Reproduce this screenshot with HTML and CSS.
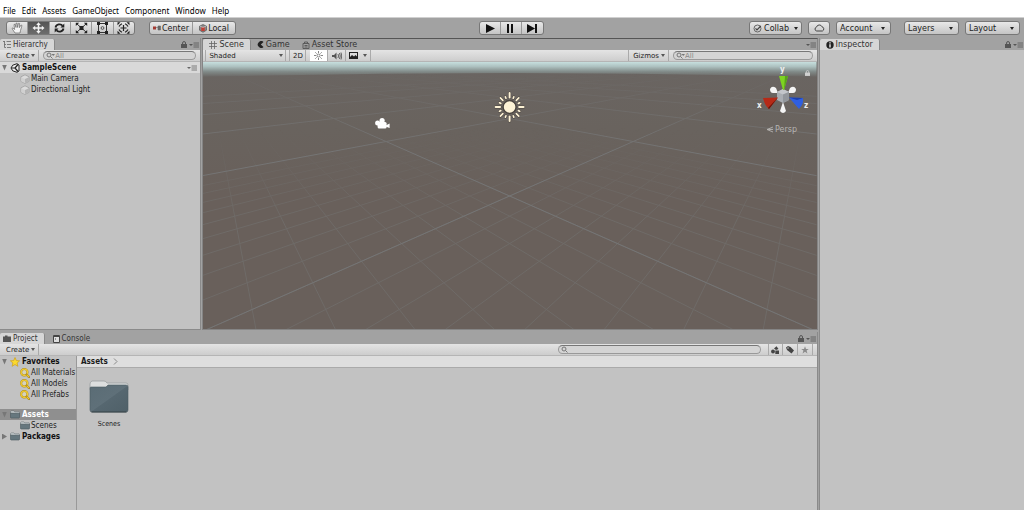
FILE: index.html
```html
<!DOCTYPE html>
<html lang="en">
  <head>
    <meta charset="UTF-8" />
    <meta name="viewport" content="width=device-width, initial-scale=1.0" />
    <title>SampleScene</title>
    <link rel="stylesheet" href="styles.css">
  </head>
  <body>
    <!-- Shared icons -->
    <svg class="sprite" aria-hidden="true">
      <symbol id="lock" viewBox="0 0 6 7">
        <path d="M1.6 3.5V2a1.4 1.4 0 0 1 2.9 0v1.5" fill="none" stroke="currentColor" stroke-width="1" />
        <rect x="0" y="3" width="6" height="4" fill="currentColor" />
      </symbol>
      <symbol id="options" viewBox="0 0 10 6">
        <path d="M0 2h4l-2 2z" fill="currentColor" />
        <path d="M4.5 1H10M4.5 3H10M4.5 5H10" stroke="currentColor" stroke-width=".8" />
      </symbol>
      <symbol id="search" viewBox="0 0 9 7">
        <circle cx="3" cy="3" r="2" fill="none" stroke="#777" />
        <path d="M4.5 4.5l2 2" stroke="#777" />
      </symbol>
      <symbol id="search-drop" viewBox="0 0 9 7">
        <circle cx="3" cy="3" r="2" fill="none" stroke="#777" />
        <path d="M4.5 4.5l2 2" stroke="#777" />
        <path d="M5.500 2h3.500L7.200 4z" fill="#777" />
      </symbol>
      <symbol id="cube" viewBox="0 0 10 10">
        <path d="M5 .8l4 2v4.600L5 9.400 1 7.400V2.800z" fill="#dcdcdc" stroke="#999" stroke-width=".7" />
        <path d="M1.200 3.200L5 5v4L1.200 7.200z" fill="#d0d0d0" />
        <path d="M8.800 3.200L5 5v4l3.800-1.800z" fill="#b4b4b4" />
      </symbol>
      <symbol id="folder" viewBox="0 0 11 9">
        <path d="M.5 3V1.500L1.300.6h3l.8 1H10l.5.6V4z" fill="#d3d9da" stroke="#5c686c" stroke-width=".6" />
        <path d="M.5 3h10v4.800l-.6.6H1.100l-.6-.6z" fill="#66777e" stroke="#46545a" stroke-width=".6" />
      </symbol>
      <symbol id="filter" viewBox="0 0 10 10">
        <circle cx="4.300" cy="4.300" r="3.200" fill="#d6d3bd" stroke="#a8841a" stroke-width="2" />
        <circle cx="4.300" cy="4.300" r="3.200" fill="none" stroke="#f0cb30" stroke-width="1.400" />
        <path d="M6.600 6.600L9 9" stroke="#a8841a" stroke-width="2.200" stroke-linecap="round" />
        <path d="M6.600 6.600L9 9" stroke="#f0cb30" stroke-width="1.200" />
      </symbol>
    </svg>

    <nav class="menu">
      <button>File</button>
      <button>Edit</button>
      <button>Assets</button>
      <button>GameObject</button>
      <button>Component</button>
      <button>Window</button>
      <button>Help</button>
    </nav>

    <!-- Main toolbar -->
    <header class="toolbar">
      <div class="toolbar-left">
        <div class="group tools">
          <button aria-label="Hand">
            <svg width="13" height="12" viewBox="0 0 13 12"><path d="M4 11L1 6.500l1-.6L3.600 7.500 3 2.500l1-.3L5 5.500V1.200h1.100L6.500 5.400 7.500 1.300l1.100.2-.3 4.200L10 3l1 .5-1.500 5L9 11z" fill="#f4f4f4" stroke="#666" stroke-width=".7" /></svg>
          </button>
          <button class="active" aria-label="Move">
            <svg width="13" height="12" viewBox="0 0 13 12"><path d="M6.500.2L8.800 3H7.300v2.200H9.800V3.700L12.500 6 9.800 8.300V6.800H7.300V9h1.500L6.500 11.800 4.200 9h1.500V6.800H3.200v1.500L.5 6l2.700-2.300v1.500h2.500V3H4.200z" fill="#f2f2f2" /></svg>
          </button>
          <button aria-label="Rotate">
            <svg width="13" height="12" viewBox="0 0 13 12"><path d="M2.500 5.500C3.200 2 8 1.500 9.500 3.700M10.500 6.500C9.800 10 5 10.500 3.500 8.300" fill="none" stroke="#222" stroke-width="1.800" /><path d="M11.300 1.500v3.900H7.500zM1.700 10.500V6.600h3.800z" fill="#222" /></svg>
          </button>
          <button aria-label="Scale">
            <svg width="13" height="12" viewBox="0 0 13 12"><path d="M2 2l9 8M11 2L2 10" stroke="#333" stroke-width="1" /><path d="M4.500 4h4v4h-4z" fill="#222" /><path d="M.8.800h3.400L.8 4zM12.200.800H8.800L12.200 4zM.8 11.200h3.400L.8 8zM12.200 11.200H8.800l3.400-3.200z" fill="#222" /></svg>
          </button>
          <button aria-label="Rect">
            <svg width="13" height="12" viewBox="0 0 13 12"><path d="M2.500 1.500h8v9h-8z" fill="none" stroke="#333" /><path d="M1 0h3v3H1zM9 0h3v3H9zM1 9h3v3H1zM9 9h3v3H9z" fill="#222" /><circle cx="6.500" cy="6" r="1.400" fill="none" stroke="#555" /></svg>
          </button>
          <button aria-label="Transform">
            <svg width="13" height="12" viewBox="0 0 13 12"><path d="M2 4.500Q3 2.500 5 1.800M8 1.800Q10 2.500 11 4.500M11 7.500Q10 9.500 8 10.200M5 10.200Q3 9.500 2 7.500" fill="none" stroke="#222" stroke-width="1.200" /><path d="M6.500 3v6M3.500 6h6" stroke="#222" stroke-width="1.200" /><path d="M.5.200h3l-3 3zM12.500.200h-3l3 3zM.5 11.800h3l-3-3zM12.500 11.800h-3l3-3z" fill="#222" /></svg>
          </button>
        </div>
        <div class="group pivots">
          <button>
            <svg width="8" height="7" viewBox="0 0 8 7"><path d="M0 1.500h3v3H0z" fill="#a33a32" /><path d="M3 2.500h2M5 1h2.500v4H5z" fill="#666" stroke="#666" stroke-width=".6" /></svg>
            Center
          </button>
          <button>
            <svg width="8" height="9" viewBox="0 0 8 9"><path d="M4 .5l3.500 1.700v4L4 8.300.5 6.200v-4z" fill="#888" stroke="#444" stroke-width=".6" /><path d="M2.300 3h3.400v4H2.300z" fill="#c33f35" /><path d="M1 2.200l3 1.300 3-1.300" fill="none" stroke="#ddd" stroke-width=".6" /></svg>
            Local
          </button>
        </div>
      </div>

      <div class="group play">
        <button aria-label="Play"><svg width="10" height="9" viewBox="0 0 10 9"><path d="M1 0l9 4.500L1 9z" fill="#111" /></svg></button>
        <button aria-label="Pause"><svg width="7" height="9" viewBox="0 0 7 9"><path d="M0 0h2v9H0zM4 0h2v9H4z" fill="#111" /></svg></button>
        <button aria-label="Step"><svg width="11" height="9" viewBox="0 0 11 9"><path d="M0 0l8 4.500L0 9zM8 0h2v9H8z" fill="#111" /></svg></button>
      </div>

      <div class="toolbar-right">
        <button class="btn collab">
          <svg width="9" height="9" viewBox="0 0 9 9"><circle cx="4.500" cy="4.500" r="3.500" fill="none" stroke="#666" stroke-width="1" /><path d="M2.500 4.300l1.500 1.500L7.800 2" fill="none" stroke="#444" stroke-width="1.200" /></svg>
          Collab
          <span class="arrow"></span>
        </button>
        <button class="btn cloud" aria-label="Services">
          <svg width="11" height="8" viewBox="0 0 11 8"><path d="M2.700 7a2 2 0 0 1-.2-3.900A2.900 2.900 0 0 1 8 2.800 2.200 2.200 0 0 1 8.400 7z" fill="none" stroke="#444" /></svg>
        </button>
        <div class="drop"><select aria-label="Account"><option>Account</option></select></div>
        <div class="drop spaced"><select aria-label="Layers"><option>Layers</option></select></div>
        <div class="drop"><select aria-label="Layout"><option>Layout</option></select></div>
      </div>
    </header>

    <main class="workspace">
      <div class="main-column">
        <div class="top-row">
          <!-- Hierarchy -->
          <section class="panel hierarchy">
            <div class="tabs">
              <button class="tab active">
                <svg width="8" height="7" viewBox="0 0 8 7"><path d="M0 .5h2M1.500 .5v6M1.500 3.500H3M1.500 6.500H3M3.500.500H8M4 3.500h4M4 6.500h4" stroke="#666" stroke-width=".8" fill="none" /></svg>
                Hierarchy
              </button>
              <div class="tab-tools">
                <svg width="6" height="7"><use href="#lock" /></svg>
                <svg width="10" height="6"><use href="#options" /></svg>
              </div>
            </div>
            <div class="bar">
              <button class="bar-btn">Create <span class="arrow"></span></button>
              <label class="search">
                <svg width="9" height="7"><use href="#search-drop" /></svg>
                <input type="text" placeholder="All" aria-label="Search hierarchy">
              </label>
            </div>
            <div class="row scene-row">
              <span class="fold open"></span>
              <svg width="10" height="10" viewBox="0 0 10 10"><path d="M7 .7L2.700 2.200 1 5l1.700 2.800L7 9.300 9 8V2z" fill="#eee" stroke="#222" stroke-width="1" /><path d="M5 5H1.500M5 5l3-3.500M5 5l3 3.500" stroke="#222" stroke-width="1.200" /></svg>
              <span>SampleScene</span>
              <svg class="push" width="10" height="6"><use href="#options" /></svg>
            </div>
            <div class="row child">
              <svg width="10" height="10"><use href="#cube" /></svg>
              <span>Main Camera</span>
            </div>
            <div class="row child">
              <svg width="10" height="10"><use href="#cube" /></svg>
              <span>Directional Light</span>
            </div>
          </section>

          <!-- Scene view -->
          <section class="panel scene">
            <div class="tabs">
              <button class="tab active">
                <svg width="8" height="8" viewBox="0 0 8 8"><path d="M2.500 0v8M5.500 0v8M0 2.500h8M0 5.500h8" stroke="#666" stroke-width=".8" /></svg>
                Scene
              </button>
              <button class="tab">
                <svg width="7" height="7" viewBox="0 0 7 7"><path d="M6.500 1A3.400 3.400 0 1 0 6.500 6L3.800 3.500z" fill="#222" /></svg>
                Game
              </button>
              <button class="tab">
                <svg width="8" height="8" viewBox="0 0 8 8"><path d="M1 2.500h6v5H1zM2.500 2.500V1h3v1.500M2.500 4.500h3M2.500 6h3" fill="none" stroke="#555" stroke-width=".9" /></svg>
                Asset Store
              </button>
              <div class="tab-tools">
                <svg width="10" height="6"><use href="#options" /></svg>
              </div>
            </div>
            <div class="bar scene-bar">
              <div class="bar-drop"><select aria-label="Shading"><option>Shaded</option></select></div>
              <button class="bar-btn split">2D</button>
              <button class="bar-btn lit" aria-label="Lighting">
                <svg width="9" height="9" viewBox="0 0 9 9"><circle cx="4.500" cy="4.500" r="1.500" fill="none" stroke="#666" stroke-width=".8" /><path d="M4.500 0v2M4.500 7v2M0 4.500h2M7 4.500h2M1.300 1.300l1.300 1.300M6.400 6.400l1.300 1.300M7.700 1.300L6.400 2.600M2.600 6.400L1.300 7.700" stroke="#666" stroke-width=".8" /></svg>
              </button>
              <button class="bar-btn icon" aria-label="Audio">
                <svg width="10" height="8" viewBox="0 0 10 8"><path d="M0 3h2l2.500-2.500v7L2 5H0z" fill="#555" /><path d="M6 2q1 2 0 4M7.500 1q1.500 3 0 6M9 .5q1.500 3.500 0 7" fill="none" stroke="#555" stroke-width=".9" /></svg>
              </button>
              <button class="bar-btn icon effects" aria-label="Effects">
                <svg width="9" height="7" viewBox="0 0 9 7"><path d="M0 0h9v7H0z" fill="#222" /><path d="M1 5l2-2 2 1.500L6.500 3 8 4.500V1H1z" fill="#ddd" /></svg>
                <span class="arrow"></span>
              </button>
              <button class="bar-btn gizmos">Gizmos <span class="arrow"></span></button>
              <label class="search scene-search">
                <svg width="9" height="7"><use href="#search-drop" /></svg>
                <input type="text" placeholder="All" aria-label="Search scene">
              </label>
            </div>
            <div class="viewport">
              <svg class="world" viewBox="0 0 614 267" preserveAspectRatio="xMidYMin slice">
                <defs>
                  <linearGradient id="sky" x1="0" y1="0" x2="0" y2="15" gradientUnits="userSpaceOnUse">
                    <stop offset="0" stop-color="#c6dfde" />
                    <stop offset=".3" stop-color="#adc1c0" />
                    <stop offset=".65" stop-color="#818a88" />
                    <stop offset="1" stop-color="#696562" />
                  </linearGradient>
                  <linearGradient id="ground" x1="0" y1="0" x2="0" y2="1">
                    <stop offset="0" stop-color="#6a6562" />
                    <stop offset=".25" stop-color="#69635e" />
                    <stop offset=".5" stop-color="#69605b" />
                  </linearGradient>
                  <linearGradient id="near" x1="0" y1="66" x2="0" y2="160" gradientUnits="userSpaceOnUse">
                    <stop offset="0" stop-color="#000" />
                    <stop offset="1" stop-color="#fff" />
                  </linearGradient>
                  <linearGradient id="far" x1="0" y1="8" x2="0" y2="90" gradientUnits="userSpaceOnUse">
                    <stop offset="0" stop-color="#000" />
                    <stop offset="1" stop-color="#fff" />
                  </linearGradient>
                  <mask id="nearMask" maskUnits="userSpaceOnUse" x="0" y="0" width="614" height="267"><rect width="614" height="267" fill="url(#near)" /></mask>
                  <mask id="farMask" maskUnits="userSpaceOnUse" x="0" y="0" width="614" height="267"><rect width="614" height="267" fill="url(#far)" /></mask>
                </defs>
                <rect width="614" height="267" fill="url(#ground)" />
                <path d="M0 0h614v15Q307 7 0 15z" fill="url(#sky)" />
                <g mask="url(#nearMask)"><g id="minorLines" class="minor"></g></g>
                <g mask="url(#farMask)"><g id="majorLines" class="major"></g></g>

                <!-- Camera gizmo -->
                <g transform="translate(172 56)" fill="#fff">
                  <circle cx="3" cy="5" r="2.500" />
                  <circle cx="7.500" cy="2.500" r="2.600" />
                  <rect x="3" y="4" width="9" height="6.500" rx="1.500" />
                  <path d="M11 7.500l4-2v4.500l-4-1.500z" />
                </g>

                <!-- Light gizmo, rays are added by the script -->
                <g transform="translate(307 45)">
                  <g id="rays" stroke-linecap="round"></g>
                  <circle r="6.500" fill="#fdf2d5" stroke="#4a443f" stroke-width="1.400" />
                </g>
              </svg>
              <svg class="axis" width="56" height="74" viewBox="0 0 56 74">
                <path d="M23 29l-2-5q-4-3-6 1 0 4 3 4zM33 29l2-5q4-3 6 1 0 4-3 4z" fill="#f4f4f4" />
                <path d="M28 38l3 9q-3 4-6 0z" fill="#f4f4f4" />
                <path d="M22 28l6-3 6 3v8l-6 3-6-3z" fill="#a9adb2" />
                <path d="M22 28l6 2.500 6-2.500-6-3z" fill="#c3c6ca" />
                <path d="M28 30.500l6-2.500v8l-6 3z" fill="#92969b" />
                <path d="M24 12h9l-4 14h-1z" fill="#7ed321" />
                <path d="M30 12h3l-4 14z" fill="#58a41a" />
                <path d="M8 34l15-.500-9 11.500q-4-3-6-11z" fill="#b62a17" />
                <path d="M13 44l10-10.500-9 11.500z" fill="#681308" />
                <path d="M34 33.500l14 .500q1 6-4 11z" fill="#2f5fe0" />
                <path d="M34 33.500l14 .500-6 2z" fill="#1b3fae" />
                <text x="25" y="8">y</text>
                <text x="2" y="44">x</text>
                <text x="49" y="44">z</text>
                <path d="M18 63l-6 2.500 6 2.500M12 65.500h6" fill="none" stroke="#b5b3b1" stroke-width=".9" />
                <text class="persp" x="20" y="68">Persp</text>
              </svg>
              <svg class="view-lock" width="5" height="6"><use href="#lock" /></svg>
            </div>
          </section>
        </div>

        <!-- Project -->
        <section class="panel project">
          <div class="tabs">
            <button class="tab active">
              <svg width="8" height="7" viewBox="0 0 8 7"><path d="M0 1.500h2V.500h2.500v1H8V7H0z" fill="#555" /></svg>
              Project
            </button>
            <button class="tab">
              <svg width="7" height="8" viewBox="0 0 7 8"><path d="M.5.500h6v7h-6z" fill="#ddd" stroke="#444" /><path d="M1 1.500h5M2 4h1" stroke="#444" /></svg>
              Console
            </button>
            <div class="tab-tools">
              <svg width="6" height="7"><use href="#lock" /></svg>
              <svg width="10" height="6"><use href="#options" /></svg>
            </div>
          </div>
          <div class="bar">
            <button class="bar-btn">Create <span class="arrow"></span></button>
            <label class="search project-search">
              <svg width="9" height="7"><use href="#search" /></svg>
              <input type="text" aria-label="Search project">
            </label>
            <button class="bar-btn icon split" aria-label="Search by type">
              <svg width="8" height="8" viewBox="0 0 8 8"><path d="M3 2.500L5.500.3 7.500 3 5 4z" fill="#444" /><circle cx="2" cy="5.500" r="1.900" fill="#444" /><path d="M4.300 4.500H8V8H4.300z" fill="#444" /></svg>
            </button>
            <button class="bar-btn icon" aria-label="Search by label">
              <svg width="8" height="8" viewBox="0 0 8 8"><path d="M0 1.500L2 0l2.500 1L8 4.500 5.500 7.500 1 4z" fill="#444" /><circle cx="2" cy="2" r=".7" fill="#ddd" /></svg>
            </button>
            <button class="bar-btn icon" aria-label="Save search">
              <svg width="8" height="8" viewBox="0 0 8 8"><path d="M4 .3l1 2.600h2.800L5.600 4.600l.8 2.900L4 5.800 1.600 7.500l.8-2.900L.2 2.900H3z" fill="#8b8b8b" /></svg>
            </button>
          </div>
          <div class="browser">
            <aside class="tree">
              <div class="row bold">
                <span class="fold open"></span>
                <svg width="10" height="10" viewBox="0 0 10 10"><path d="M5 .5l1.300 3 3.300.3-2.500 2.200.8 3.300L5 7.500 2.100 9.300l.8-3.300L.4 3.800l3.300-.3z" fill="#fbd92e" stroke="#cda01c" stroke-width=".7" /></svg>
                <span>Favorites</span>
              </div>
              <div class="row child"><svg width="10" height="10"><use href="#filter" /></svg><span>All Materials</span></div>
              <div class="row child"><svg width="10" height="10"><use href="#filter" /></svg><span>All Models</span></div>
              <div class="row child"><svg width="10" height="10"><use href="#filter" /></svg><span>All Prefabs</span></div>
              <div class="row bold selected">
                <span class="fold open"></span>
                <svg width="10" height="9"><use href="#folder" /></svg>
                <span>Assets</span>
              </div>
              <div class="row child"><svg width="10" height="9"><use href="#folder" /></svg><span>Scenes</span></div>
              <div class="row bold">
                <span class="fold"></span>
                <svg width="10" height="9"><use href="#folder" /></svg>
                <span>Packages</span>
              </div>
            </aside>
            <div class="content">
              <div class="crumbs">
                Assets
                <svg width="5" height="7" viewBox="0 0 5 7"><path d="M1 .5l3 3-3 3" fill="none" stroke="#888" /></svg>
              </div>
              <button class="item">
                <svg width="40" height="34" viewBox="0 0 40 34">
                  <defs>
                    <linearGradient id="front" x1="0" y1="0" x2="1" y2="1">
                      <stop offset="0" stop-color="#5a6c75" />
                      <stop offset=".5" stop-color="#5f7079" />
                      <stop offset=".52" stop-color="#566770" />
                      <stop offset="1" stop-color="#4f6068" />
                    </linearGradient>
                  </defs>
                  <path d="M1 10V4q0-2 2-3h12q2 0 3 2h19q2 0 2 2v5H1z" fill="#dcdede" stroke="#9aa0a1" stroke-width=".8" />
                  <path d="M1 8q0-1 1-1h15l2-2h18q2 0 2 2v23q0 2-2 2H3q-2 0-2-2z" fill="url(#front)" stroke="#4c5a61" stroke-width=".6" />
                  <path d="M2.500 32h35" stroke="#394449" stroke-width="1" />
                </svg>
                <span>Scenes</span>
              </button>
            </div>
          </div>
        </section>
      </div>

      <!-- Inspector -->
      <section class="panel inspector">
        <div class="tabs">
          <button class="tab active">
            <svg width="8" height="8" viewBox="0 0 8 8"><circle cx="4" cy="4" r="3.700" fill="#222" /><path d="M4 3.200V6.500M4 1.300v1.200" stroke="#fff" stroke-width="1.300" /></svg>
            Inspector
          </button>
          <div class="tab-tools">
            <svg width="6" height="7"><use href="#lock" /></svg>
            <svg width="10" height="6"><use href="#options" /></svg>
          </div>
        </div>
      </section>
    </main>

    <script src="scene.js"></script>
  </body>
</html>
```

FILE: styles.css
```css
/* Basic Styles */
* {
  box-sizing: border-box;
}

body {
  display: flex;
  flex-direction: column;
  height: 100vh;
  margin: 0;
  overflow: hidden;
  background-color: #a2a2a2;
  color: #1c1c1c;
  font-family: "DejaVu Sans Condensed", "DejaVu Sans", sans-serif;
  font-size: 8px;
}

button,
input,
select {
  margin: 0;
  padding: 0;
  border: 0;
  border-radius: 0;
  outline: 0;
  background: none;
  color: inherit;
  font: inherit;
}

svg {
  display: block;
  flex-shrink: 0;
}

.sprite {
  position: absolute;
  width: 0;
  height: 0;
}

.arrow {
  border: 2px solid transparent;
  border-top: 3px solid #222;
  border-bottom: 0;
}

/* Menu */
.menu {
  display: flex;
  flex-shrink: 0;
  gap: 6px;
  height: 17px;
  padding: 3px 3px 0;
  background-color: #fff;
  color: #000;
  font-family: "Noto Sans", sans-serif;
}

/* Toolbar */
.toolbar {
  display: grid;
  grid-template-columns: 1fr auto 1fr;
  align-items: center;
  flex-shrink: 0;
  height: 21px;
  padding: 0 4px 0 6px;
  border-top: 1px solid #d0d0d0;
  font-family: "DejaVu Sans", sans-serif;
}

.toolbar-left,
.toolbar-right {
  display: flex;
}

.toolbar-left {
  gap: 14px;
}

.toolbar-right {
  justify-content: flex-end;
  gap: 6px;
}

.group,
.btn,
.drop {
  height: 14px;
  border: 1px solid #777;
  border-radius: 3px;
  background: linear-gradient(#e8e8e8, #c4c4c4);
}

.group {
  display: flex;
  overflow: hidden;
}

.group button {
  display: flex;
  align-items: center;
  justify-content: center;
  gap: 1px;
}

.group button + button {
  border-left: 1px solid #999;
}

.tools {
  width: 129px;
}

.tools button,
.pivots button,
.play button {
  flex: 1;
}

.tools .active {
  background: linear-gradient(#555, #6c6c6c);
}

.pivots {
  width: 87px;
}

.play {
  width: 65px;
  margin-right: 4px;
}

.btn {
  display: flex;
  align-items: center;
  justify-content: center;
  gap: 2px;
}

.collab {
  width: 53px;
}

.collab .arrow {
  margin-left: 3px;
}

.cloud {
  width: 22px;
}

.drop {
  position: relative;
  width: 55px;
}

.drop.spaced {
  margin-left: 7px;
}

.drop select,
.bar-drop select {
  display: block;
  width: 100%;
  height: 100%;
  padding-left: 3px;
  appearance: none;
}

.drop::after,
.bar-drop::after {
  content: "";
  position: absolute;
  top: 5px;
  right: 5px;
  border: 2px solid transparent;
  border-top: 3px solid #222;
  border-bottom: 0;
  pointer-events: none;
}

/* Workspace */
.workspace {
  display: flex;
  flex: 1;
  gap: 1px;
  min-height: 0;
}

.main-column {
  display: flex;
  flex: 4;
  flex-direction: column;
  gap: 2px;
  min-width: 0;
}

.top-row {
  display: flex;
  flex: 292;
  gap: 1px;
  min-height: 0;
}

.panel {
  display: flex;
  flex-direction: column;
  min-width: 0;
  min-height: 0;
  border-right: 1px solid #8a8a8a;
  background-color: #c2c2c2;
}

.hierarchy {
  flex: 201;
  border-bottom: 1px solid #8a8a8a;
}

.scene {
  flex: 615;
  border: 1px solid #858585;
  border-top-color: #555;
}

.project {
  flex: 178;
}

.inspector {
  flex: 1;
  border-right: 0;
  border-left: 1px solid #8a8a8a;
}

/* Tabs */
.tabs {
  display: flex;
  align-items: flex-end;
  flex-shrink: 0;
  height: 12px;
  background-color: #a2a2a2;
}

.scene .tabs {
  height: 11px;
}

.tab {
  display: flex;
  align-items: center;
  gap: 2px;
  height: 11px;
  padding: 0 6px 0 3px;
  color: #333;
}

.scene .tab,
.inspector .tab {
  padding-left: 6px;
  font-family: "DejaVu Sans", sans-serif;
}

.tab.active {
  border-right: 1px solid #888;
  border-radius: 2px 2px 0 0;
  background-color: #d6d6d6;
}

.project .tab + .tab {
  padding-left: 8px;
}

.tab-tools {
  display: flex;
  align-items: center;
  gap: 2px;
  height: 11px;
  margin-left: auto;
  padding-right: 1px;
  color: #555;
}

/* Panel bars */
.bar {
  display: flex;
  align-items: center;
  flex-shrink: 0;
  height: 12px;
  padding: 0 4px 0 2px;
  border-bottom: 1px solid #b5b5b5;
  background: linear-gradient(#e4e4e4, #cdcdcd);
  font-family: "DejaVu Sans", sans-serif;
  font-size: 7px;
}

.bar-btn {
  display: flex;
  align-items: center;
  justify-content: center;
  gap: 2px;
  height: 100%;
  padding: 0 3px 0 4px;
  border-right: 1px solid #aaa;
}

.bar .arrow {
  border-width: 3px 2px 0;
  border-top-color: #555;
}

.search {
  display: flex;
  align-items: center;
  flex: 1;
  height: 9px;
  margin-left: 4px;
  padding-left: 2px;
  border: 1px solid #999;
  border-top-color: #777;
  border-radius: 5px;
  background-color: #d4d4d4;
}

.search input {
  width: 100%;
  min-width: 0;
  height: 7px;
}

.search input::placeholder {
  color: #888;
}

.bar-drop {
  position: relative;
  width: 81px;
  height: 100%;
  margin-right: 3px;
  border-right: 1px solid #aaa;
  border-left: 1px solid #aaa;
}

.bar-drop::after {
  top: 4px;
  right: 2px;
  border-top-color: #555;
}

.split {
  border-left: 1px solid #aaa;
}

.scene-bar .split {
  width: 17px;
  margin-right: 4px;
  padding: 0;
}

.lit {
  width: 18px;
  padding: 0;
  background-color: #fff;
}

.bar-btn.icon {
  width: 18px;
  padding: 0;
}

.bar-btn.effects {
  gap: 5px;
  width: 25px;
}

.gizmos {
  margin-left: auto;
  border-left: 1px solid #aaa;
}

.scene-search {
  flex: none;
  width: 23%;
}

.project .bar .icon {
  width: 15px;
}

.project-search {
  flex: none;
  width: 25%;
  margin-right: 7px;
  margin-left: auto;
}

/* Rows */
.row {
  display: flex;
  align-items: center;
  gap: 2px;
  height: 11px;
  padding-left: 2px;
  white-space: nowrap;
}

.row.child {
  gap: 1px;
  padding-left: 20px;
}

.scene-row,
.bold {
  color: #111;
  font-weight: bold;
}

.scene-row {
  padding-right: 3px;
  background-color: #d9d9d9;
}

.push {
  margin-left: auto;
  color: #666;
}

.fold {
  width: 5px;
  height: 6px;
  margin-right: 1px;
  background-color: #777;
  clip-path: polygon(0 0, 100% 50%, 0 100%);
}

.fold.open {
  clip-path: polygon(0 0, 100% 0, 50% 100%);
}

/* Scene view */
.viewport {
  position: relative;
  flex: 1;
  min-height: 0;
  background-color: #69605b;
}

.world {
  width: 100%;
  height: 100%;
}

.major {
  fill: none;
  stroke: #757575;
  stroke-width: 1;
}

.minor {
  fill: none;
  stroke: #6f6b68;
  stroke-width: 1;
}

.axis {
  position: absolute;
  top: 2px;
  right: 6px;
}

.axis text {
  fill: #f0f0f0;
  font-weight: bold;
}

.axis .persp {
  fill: #b5b3b1;
  font-family: "DejaVu Sans", sans-serif;
  font-weight: normal;
}

.view-lock {
  position: absolute;
  top: 8px;
  right: 7px;
  color: #d0d0d0;
}

/* Project browser */
.browser {
  display: flex;
  flex: 1;
  min-height: 0;
}

.tree {
  width: 77px;
  flex-shrink: 0;
  overflow: hidden;
  border-right: 1px solid #999;
}

.selected {
  margin-top: 9px;
  background-color: #8f8f8f;
  color: #fff;
}

.content {
  flex: 1;
}

.crumbs {
  display: flex;
  align-items: center;
  gap: 5px;
  height: 12px;
  padding-left: 4px;
  border-bottom: 1px solid #aaa;
  background-color: #dedede;
  font-weight: bold;
}

.item {
  display: flex;
  flex-direction: column;
  align-items: center;
  gap: 6px;
  margin: 12px 0 0 12px;
  font-size: 7px;
}
```

FILE: scene.js
```js
const SVG_NS = 'http://www.w3.org/2000/svg'

// Centre of the grid on screen, and distance of the vanishing points from it
const center = { x: 307, y: 134 }
const spread = 304

function addPath(parent, d) {
  const path = document.createElementNS(SVG_NS, 'path')
  path.setAttribute('d', d)
  parent.appendChild(path)
  return path
}

// Ground point (u, v) to screen
function project(u, v, k) {
  const w = 1 + k * (u + v)
  return [center.x + (spread * k * (u - v)) / w, center.y / w]
}

// Draws both families of parallel lines, left and right
function drawLines(id, from, to, step, k) {
  const parent = document.getElementById(id)
  for (let u = from; u <= to; u += step) {
    const v = -0.8 / k - u
    const [x, y] = project(u, v, k)
    addPath(parent, `M${x.toFixed(1)} ${y.toFixed(1)}L${center.x - spread} 0`)
    addPath(
      parent,
      `M${(2 * center.x - x).toFixed(1)} ${y.toFixed(1)}L${center.x + spread} 0`
    )
  }
}

// Rays of the light icon
function drawRays() {
  const rays = document.getElementById('rays')
  const styles = [
    ['#4a443f', 3],
    ['#fdf2d5', 2],
  ]
  styles.forEach(([color, width]) => {
    for (let i = 0; i < 16; i++) {
      const angle = (i * Math.PI) / 8
      const end = i % 4 === 0 ? 14 : i % 2 === 0 ? 13 : 11
      const x = Math.cos(angle)
      const y = Math.sin(angle)
      const ray = addPath(rays, `M${x * 9.5} ${y * 9.5}L${x * end} ${y * end}`)
      ray.setAttribute('stroke', color)
      ray.setAttribute('stroke-width', i % 4 === 0 ? width : width - 0.3)
    }
  })
}

drawLines('minorLines', -24, 9, 1, 0.0655)
drawLines('majorLines', -20, 50, 10, 0.0685)
drawRays()
```
